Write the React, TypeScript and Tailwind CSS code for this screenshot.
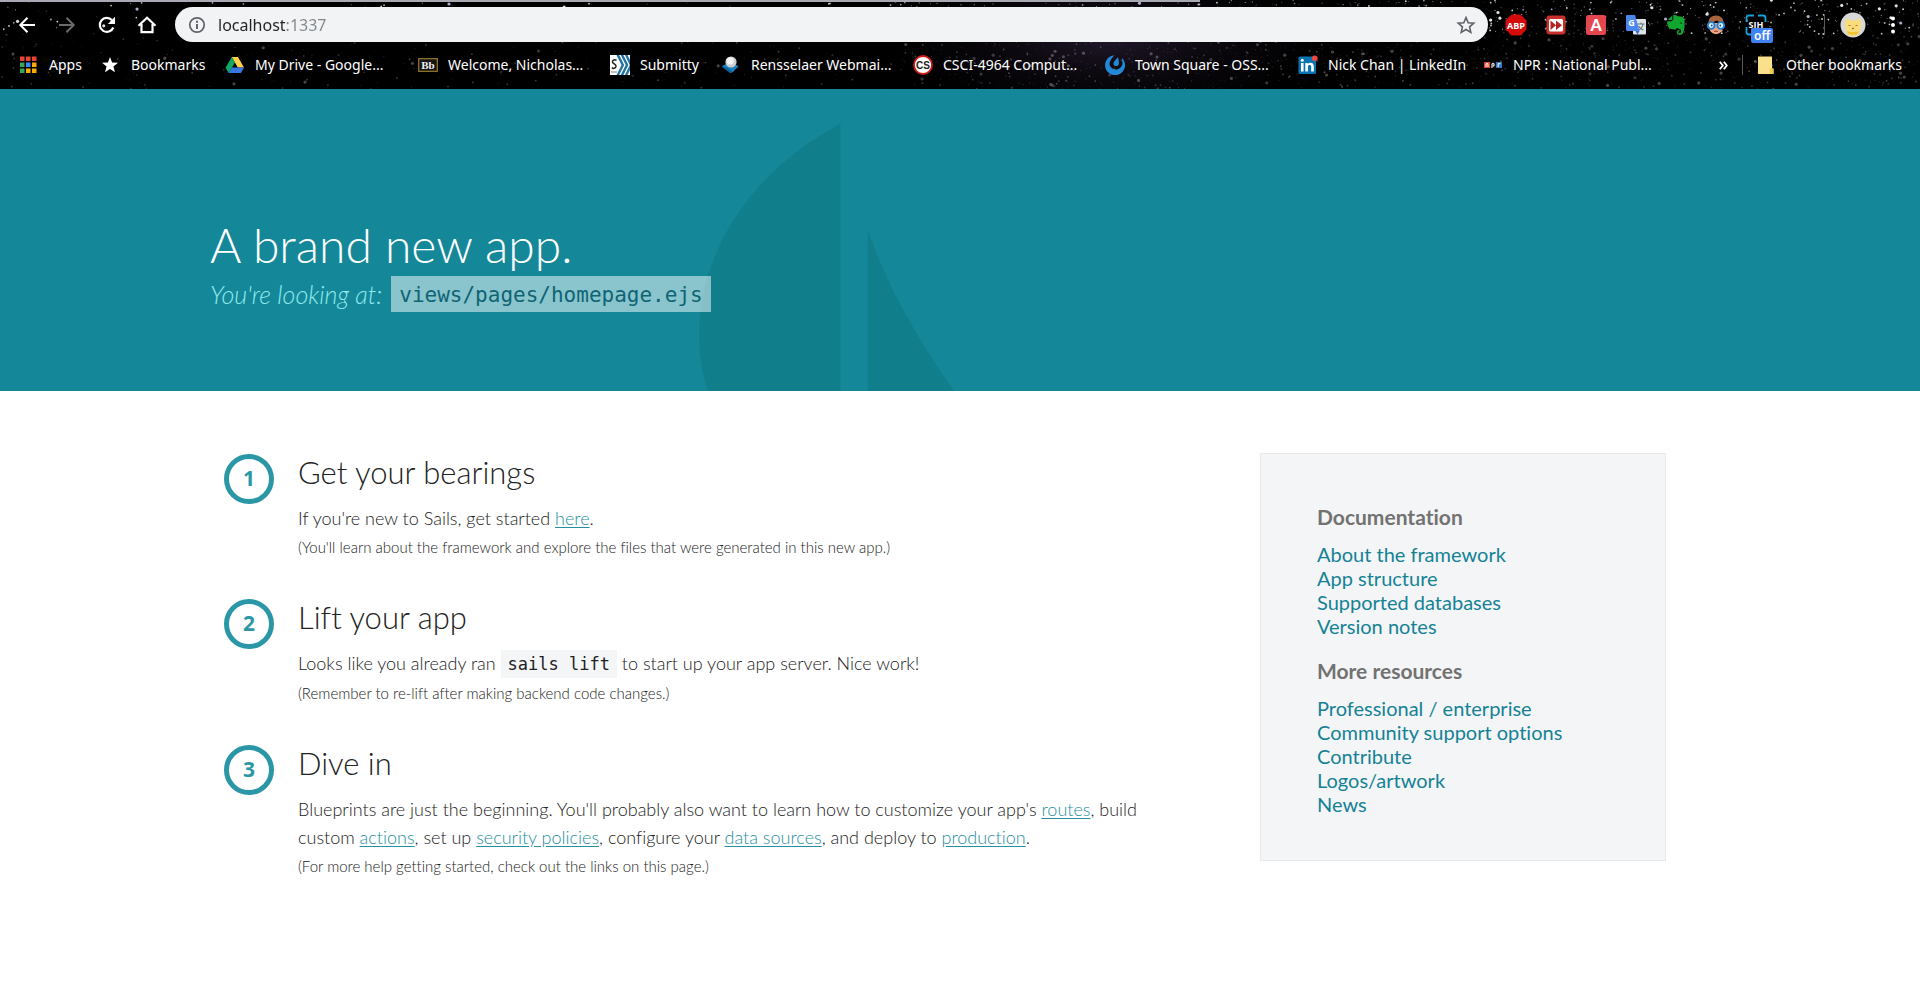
import type { ReactNode } from "react";

type Star = { x: number; y: number; r: number; o: number; warm: boolean };

function makeStars(): Star[] {
  let seed = 4217;
  const next = () => {
    seed = (seed * 1664525 + 1013904223) % 4294967296;
    return seed / 4294967296;
  };
  const stars: Star[] = [];
  for (let i = 0; i < 3600; i++) {
    const x = next() * 1920;
    const y = next() * 89;
    const bright = next();
    const density = x > 900 ? 1 : 0.25;
    const keep = next();
    if (keep > density) continue;
    const top = y < 34 ? 1 : 0.3;
    stars.push({
      x,
      y,
      r: bright > 0.95 ? 1.6 : bright > 0.7 ? 0.9 : 0.6,
      o: (0.15 + bright * 0.75) * top,
      warm: next() > 0.7,
    });
  }
  return stars;
}

const STARS = makeStars();

function Starfield() {
  return (
    <svg className="absolute inset-0 h-full w-full" viewBox="0 0 1920 89" preserveAspectRatio="xMidYMid slice" aria-hidden="true">
      <defs>
        <radialGradient id="nebula">
          <stop offset="0" stopColor="#3b2a4a" stopOpacity="0.55" />
          <stop offset="1" stopColor="#000" stopOpacity="0" />
        </radialGradient>
      </defs>
      <rect width="1920" height="89" fill="#000" />
      <ellipse cx="1110" cy="40" rx="260" ry="90" fill="url(#nebula)" />
      {STARS.map((s, i) => (
        <circle key={i} cx={s.x} cy={s.y} r={s.r} fill={s.warm ? "#c9c4e8" : "#fff"} opacity={s.o} />
      ))}
    </svg>
  );
}

function ToolButton({ label, children }: { label: string; children: ReactNode }) {
  return (
    <button type="button" aria-label={label} className="relative flex h-9 w-10 shrink-0 items-center justify-center">
      {children}
    </button>
  );
}

function BackIcon() {
  return (
    <svg width="18" height="18" viewBox="0 0 18 18" fill="none" stroke="#fff" strokeWidth="2">
      <path d="M17 9H2.5M9.5 1.8 2.3 9l7.2 7.2" />
    </svg>
  );
}

function ForwardIcon() {
  return (
    <svg width="18" height="18" viewBox="0 0 18 18" fill="none" stroke="#6b6b6b" strokeWidth="2">
      <path d="M1 9h14.500M8.500 1.800 15.700 9l-7.200 7.200" />
    </svg>
  );
}

function ReloadIcon() {
  return (
    <svg width="18" height="18" viewBox="0 0 18 18" fill="none">
      <path d="M15.300 11.500A7 7 0 1 1 14 4.200" stroke="#fff" strokeWidth="2.200" />
      <path d="M17 .8V8H9.800z" fill="#fff" />
    </svg>
  );
}

function HomeIcon() {
  return (
    <svg width="20" height="18" viewBox="0 0 20 18" fill="none" stroke="#fff" strokeWidth="2.200">
      <path d="M1.500 9.800 10 1.800l8.500 8M4.500 8v8.200h11V8" />
    </svg>
  );
}

function InfoIcon() {
  return (
    <svg width="18" height="18" viewBox="0 0 18 18" fill="none" className="shrink-0">
      <circle cx="9" cy="9" r="7.200" stroke="#5f6368" strokeWidth="1.700" />
      <path d="M9 8v5" stroke="#5f6368" strokeWidth="2" />
      <path d="M9 4.800v2" stroke="#5f6368" strokeWidth="2" />
    </svg>
  );
}

function StarOutline() {
  return (
    <svg width="20" height="20" viewBox="0 0 20 20" fill="none" stroke="#5f6368" strokeWidth="1.600">
      <path d="m10 2.500 2.200 5.200 5.600.5-4.200 3.700 1.200 5.500L10 14.500l-4.800 2.900 1.200-5.500L2.200 8.200l5.600-.5z" />
    </svg>
  );
}

function AbpIcon() {
  return (
    <svg width="22" height="22" viewBox="0 0 22 22">
      <path d="M6.500.5h9l6 6v9l-6 6h-9l-6-6v-9z" fill="#d40b0b" />
      <text x="11" y="14.500" textAnchor="middle" fontSize="9" fontWeight="700" fontFamily="Open Sans, sans-serif" fill="#fff">ABP</text>
    </svg>
  );
}

function SkipIcon() {
  return (
    <svg width="20" height="20" viewBox="0 0 20 20">
      <rect x="0.500" y="0.500" width="19" height="19" rx="3" fill="#c9302c" />
      <rect x="3" y="4" width="14" height="12.500" rx="1.500" fill="#fff" />
      <path d="m4.500 5.500 5.500 4.700-5.500 4.700zM10 5.500l6 4.700-6 4.700z" fill="#b5221f" />
    </svg>
  );
}

function AIcon() {
  return (
    <svg width="20" height="20" viewBox="0 0 20 20">
      <rect width="20" height="20" rx="2.500" fill="#e5454d" />
      <text x="10" y="15.500" textAnchor="middle" fontSize="16" fontWeight="900" fontFamily="Lato, sans-serif" fill="#fff">A</text>
    </svg>
  );
}

function TranslateIcon() {
  return (
    <svg width="22" height="22" viewBox="0 0 22 22">
      <rect x="8" y="5" width="13" height="15.500" rx="1" fill="#dfe3e8" />
      <path d="M12.500 10h7M16 8.500V10m2 0c-.5 3-2.500 5-4.500 6m0-4c1 2 2.500 3.500 5 4" stroke="#5c7480" strokeWidth="1.100" fill="none" />
      <path d="M1.500 1H10l4.500 16H2.500A1.500 1.500 0 0 1 1 15.500v-14z" fill="#4a86ee" />
      <path d="M10.500 17h4l-2 3.500z" fill="#3367d6" />
      <text x="6.500" y="12" textAnchor="middle" fontSize="9" fontWeight="700" fontFamily="Open Sans, sans-serif" fill="#fff">G</text>
    </svg>
  );
}

function EvernoteIcon() {
  return (
    <svg width="20" height="22" viewBox="0 0 20 22">
      <path d="M6.300 1.500v3.200c0 .8-.6 1.400-1.400 1.400H1.700z" fill="#10a630" />
      <path d="M7.300 1c2.200-.2 3.500.3 4 1.300 2 .1 4 .4 5.400.9 1.300.5 1.600 1.800 1.800 3.600.4 3.800.1 9-1.400 12.300-.6 1.400-1.800 1.800-3.300 1.800-1.900 0-3-1-3-2.600 0-1.500 1.100-2.500 2.700-2.500v1.500c-.8 0-1.200.4-1.200 1s.5 1 1.400 1c.9 0 1.400-.6 1.400-2.200 0-1.300-.6-1.900-1.800-2.100-1.200-.2-1.700-.5-2.300-1.300-.5 1.500-1.700 1.900-3.400 1.700C4.700 15 2.800 14.400 2 12.500 1.300 10.800 1 9 1 7.300h4.200c1.300 0 2.100-.8 2.100-2.100z" fill="#10a630" />
      <path d="M13.800 9.300c.3-1 2.100-1 2.400.4-.9-.3-1.600-.3-2.400-.4z" fill="#03300d" />
    </svg>
  );
}

function FaceIcon() {
  return (
    <svg width="20" height="20" viewBox="0 0 20 20">
      <path d="M3.500 8h13v5c0 3.500-3 6-6.500 6s-6.500-2.500-6.500-6z" fill="#e8a583" />
      <path d="M2.500 11V7.500C2.500 3.500 5.500.5 10 .5s7.500 3 7.500 7V11l-1.500-3-5.500-2.500L5 8.500z" fill="#a9643c" />
      <circle cx="5.200" cy="10.500" r="3.400" fill="#e6f4fd" stroke="#1f7fd6" strokeWidth="1.900" />
      <circle cx="14.800" cy="10.500" r="3.400" fill="#e6f4fd" stroke="#1f7fd6" strokeWidth="1.900" />
      <circle cx="5.700" cy="10.500" r="1" fill="#1b4f8a" />
      <circle cx="14.300" cy="10.500" r="1" fill="#1b4f8a" />
      <path d="M8 16.300h4" stroke="#9b3b2c" strokeWidth="1" />
    </svg>
  );
}

function SihIcon() {
  return (
    <svg width="22" height="22" viewBox="0 0 22 22">
      <path d="M1.500 8V4A2.500 2.500 0 0 1 4 1.500H9M13 1.500h5A2.500 2.500 0 0 1 20.500 4V8M1.500 13v5A2.500 2.500 0 0 0 4 20.500H8" stroke="#12a5dc" strokeWidth="1.800" fill="none" />
      <text x="11" y="14" textAnchor="middle" fontSize="9" fontWeight="700" fontFamily="Open Sans, sans-serif" fill="#fff">SIH</text>
    </svg>
  );
}

function AvatarIcon() {
  return (
    <svg width="26" height="26" viewBox="0 0 26 26">
      <circle cx="13" cy="13" r="12.500" fill="#d8d8d8" />
      <path d="M5.500 8.500 6.500 6l3 2.200h7L19.500 6l1 2.500c1 3 .5 7-.5 9.500-1 3.500-2.500 5.500-4.500 6h-5c-2-.5-3.500-2.500-4.500-6-1-2.500-1.500-6.500-.5-9.500z" fill="#fbdc7c" />
      <path d="M7 19c1.500 1.500 10.500 1.500 12 0l-.8 2.500c-1.500 1.800-8.900 1.800-10.400 0z" fill="#f4c430" />
      <path d="M8.500 13.500h2M15.500 13.500h2M12 16l1 .8 1-.8" stroke="#a5762a" strokeWidth="1.100" fill="none" />
    </svg>
  );
}

function AppsIcon() {
  const colors = ["#ea4335", "#ea4335", "#ea4335", "#34a853", "#4285f4", "#fbab05", "#34a853", "#fbab05", "#fbab05"];
  return (
    <svg width="20" height="20" viewBox="0 0 20 20">
      {colors.map((c, i) => (
        <rect key={i} x={1 + (i % 3) * 6} y={1.5 + Math.floor(i / 3) * 6} width="4.500" height="4.500" fill={c} />
      ))}
    </svg>
  );
}

function StarSolid() {
  return (
    <svg width="20" height="20" viewBox="0 0 20 20">
      <path d="m9 2 2.100 5.400 5.900.3-4.600 3.700 1.600 5.800L9 14l-5 3.200 1.600-5.800L1 7.700l5.900-.3z" fill="#fff" />
    </svg>
  );
}

function DriveIcon() {
  return (
    <svg width="20" height="20" viewBox="0 0 20 20">
      <path d="M6.800 2h6.200l6 10.500h-6.200z" fill="#ffcf48" />
      <path d="M6.800 2 10 7.500 3.600 18 .5 12.800z" fill="#11a861" />
      <path d="M6.700 12.600H19L16 18H3.600z" fill="#3777e3" />
    </svg>
  );
}

function BbIcon() {
  return (
    <svg width="20" height="20" viewBox="0 0 20 20">
      <rect x="0.700" y="3.700" width="18.600" height="12.600" fill="#151515" stroke="#9c7a2e" strokeWidth="1.200" />
      <text x="10" y="14" textAnchor="middle" fontSize="11" fontWeight="700" fontFamily="Liberation Serif, serif" fill="#f2f2f2">Bb</text>
    </svg>
  );
}

function SubmittyIcon() {
  return (
    <svg width="20" height="20" viewBox="0 0 20 20">
      <rect width="20" height="20" fill="#fff" />
      <path d="M6.500 0h2.700l5 10-5 10H6.500l5-10zM10.700 0h2.700l5 10-5 10h-2.700l5-10z" fill="#2472a4" />
      <path d="M15 0h2.500L20 5v10l-2.500 5H15l4.700-10z" fill="#2472a4" />
      <path d="M6.500 5.500C5 4 2 5 2.500 7s4 2 3.500 4.500c-.5 2-3 2.500-4 1" stroke="#222" strokeWidth="1.500" fill="none" />
      <path d="M1 17h6" stroke="#999" strokeWidth="1.200" />
    </svg>
  );
}

function WebmailIcon() {
  return (
    <svg width="20" height="20" viewBox="0 0 20 20">
      <path d="m1 11 8-4 8.500 4-5.500 6-3 .8z" fill="#1d7fbf" />
      <path d="m1 11 6 2.500 5 3.500L9 18l-7.500-5.500z" fill="#0d5f9a" />
      <circle cx="10" cy="7" r="5.600" fill="#cfcfcf" />
      <circle cx="9.200" cy="5.800" r="3.600" fill="#f4f4f4" />
    </svg>
  );
}

function CsIcon() {
  return (
    <svg width="20" height="20" viewBox="0 0 20 20">
      <circle cx="10" cy="10" r="9" fill="#fff" stroke="#d11a1a" strokeWidth="1.800" />
      <text x="10" y="13.500" textAnchor="middle" fontSize="10" fontWeight="700" fontFamily="Liberation Sans, sans-serif" fill="#222">CS</text>
    </svg>
  );
}

function MattermostIcon() {
  return (
    <svg width="20" height="20" viewBox="0 0 20 20">
      <path d="M9.500.2A10 10 0 1 0 17 3l.2 3A6.300 6.300 0 1 1 4.500 9.800C4.300 6 6.300 3.500 9.500.2z" fill="#2389d7" />
      <path d="M13 2.200c.6 2.500 1.300 5 .8 7-.6 2.300-4.300 2.600-5.200.2C7.800 7 11 4.500 13 2.200z" fill="#2389d7" />
    </svg>
  );
}

function LinkedInIcon() {
  return (
    <svg width="20" height="20" viewBox="0 0 20 20">
      <rect x="0.500" y="1.500" width="17.500" height="17.500" rx="1.500" fill="#0a73b1" />
      <path d="M3 8h2.600v8.500H3zM7.300 8h2.500v1.200c1.500-2.300 6-1.900 6 2v5.300h-2.600v-4.700c0-2.300-3.300-2.200-3.300 0v4.700H7.300z" fill="#fff" />
      <circle cx="4.300" cy="5.300" r="1.500" fill="#fff" />
      <circle cx="16.800" cy="3.200" r="2.800" fill="#f0483e" />
    </svg>
  );
}

function NprIcon() {
  return (
    <svg width="20" height="20" viewBox="0 0 20 20">
      <rect x="1" y="7" width="6" height="6" fill="#e0442c" />
      <rect x="7" y="7" width="6" height="6" fill="#111" />
      <rect x="13" y="7" width="6" height="6" fill="#3a75c4" />
      <path d="M3 12V8.700h2V12M9 13V8.700h2V11H9.500M15.200 12V8.700H17.500" stroke="#fff" strokeWidth="1" fill="none" />
    </svg>
  );
}

function FolderIcon() {
  return (
    <svg width="20" height="20" viewBox="0 0 20 20">
      <path d="M2 1.500h14v12h1.500V19H2.500L2 18.500z" fill="#fbe08b" />
      <path d="M13.500 13.500h4V19h-3.500z" fill="#f0c94f" />
    </svg>
  );
}

const bookmarks: { label: string; icon: ReactNode; width: string }[] = [
  { label: "Apps", icon: <AppsIcon />, width: "w-[82px]" },
  { label: "Bookmarks", icon: <StarSolid />, width: "w-[124px]" },
  { label: "My Drive - Google...", icon: <DriveIcon />, width: "w-[193px]" },
  { label: "Welcome, Nicholas...", icon: <BbIcon />, width: "w-48" },
  { label: "Submitty", icon: <SubmittyIcon />, width: "w-[111px]" },
  { label: "Rensselaer Webmai...", icon: <WebmailIcon />, width: "w-48" },
  { label: "CSCI-4964 Comput...", icon: <CsIcon />, width: "w-48" },
  { label: "Town Square - OSS...", icon: <MattermostIcon />, width: "w-[193px]" },
  { label: "Nick Chan | LinkedIn", icon: <LinkedInIcon />, width: "w-[185px]" },
  { label: "NPR : National Publ...", icon: <NprIcon />, width: "w-48" },
];

function BrowserBar() {
  return (
    <div className="relative h-[90px] overflow-hidden border-b border-[#148898] bg-black font-['Noto_Sans','Open_Sans',sans-serif] text-white">
      <Starfield />
      <div className="relative flex h-full flex-col">
        <div className="h-0.5 w-[1200px] bg-[#a9a9b4]" />
        <div className="mt-[5px] flex h-[35px] items-center px-[7px]">
          <ToolButton label="Back"><BackIcon /></ToolButton>
          <ToolButton label="Forward"><ForwardIcon /></ToolButton>
          <ToolButton label="Reload"><ReloadIcon /></ToolButton>
          <ToolButton label="Home"><HomeIcon /></ToolButton>
          <div className="ml-2 flex h-[35px] min-w-0 flex-1 items-center gap-3 rounded-full bg-[#f1f3f4] pl-[13px] pr-3">
            <InfoIcon />
            <input
              type="text"
              aria-label="Address"
              defaultValue="localhost:1337"
              className="min-w-0 flex-1 bg-[linear-gradient(90deg,#202124_67px,#80868b_67px)] bg-clip-text text-base text-transparent outline-none"
            />
            <button type="button" aria-label="Bookmark this page"><StarOutline /></button>
          </div>
          <div className="ml-2 flex items-center">
            <ToolButton label="Adblock Plus"><AbpIcon /></ToolButton>
            <ToolButton label="Skip"><SkipIcon /></ToolButton>
            <ToolButton label="A"><AIcon /></ToolButton>
            <ToolButton label="Translate"><TranslateIcon /></ToolButton>
            <ToolButton label="Evernote"><EvernoteIcon /></ToolButton>
            <ToolButton label="Face"><FaceIcon /></ToolButton>
            <ToolButton label="SIH">
              <SihIcon />
              <span className="absolute bottom-0 left-[15px] rounded-xs bg-[#3f82f4] px-[3px] text-xs leading-[15px] font-semibold">off</span>
            </ToolButton>
          </div>
          <div className="ml-12 h-5 w-px bg-[#5a5a5a]" />
          <div className="ml-2 flex">
            <ToolButton label="Profile"><AvatarIcon /></ToolButton>
            <ToolButton label="Menu">
              <svg width="4" height="18" viewBox="0 0 4 18" fill="#fff">
                <circle cx="2" cy="2.500" r="2" />
                <circle cx="2" cy="9" r="2" />
                <circle cx="2" cy="15.500" r="2" />
              </svg>
            </ToolButton>
          </div>
        </div>
        <nav aria-label="Bookmarks" className="flex h-[46px] items-center pl-[19px] pr-[18px] text-sm">
          {bookmarks.map((b) => (
            <a key={b.label} href="#" className={`flex shrink-0 items-center gap-[10px] whitespace-nowrap ${b.width}`}>
              <span className="shrink-0">{b.icon}</span>
              {b.label}
            </a>
          ))}
          <div className="ml-auto flex shrink-0 items-center">
            <button type="button" aria-label="More bookmarks" className="mr-[14px]">
              <svg width="9" height="9" viewBox="0 0 9 9" fill="none" stroke="#fff" strokeWidth="1.800">
                <path d="m.8.8 3 3.700-3 3.700M4.800.8l3 3.700-3 3.700" />
              </svg>
            </button>
            <div className="mr-[13px] h-5 w-px bg-[#5a5a5a]" />
            <a href="#" className="flex items-center gap-[10px] whitespace-nowrap">
              <FolderIcon />
              Other bookmarks
            </a>
          </div>
        </nav>
      </div>
    </div>
  );
}

function Hero() {
  return (
    <header className="relative h-[301px] bg-[#148898]">
      <svg className="absolute bottom-0 left-1/2 -translate-x-full" width="261" height="267" viewBox="699 124 261 267" fill="#117e8c" aria-hidden="true">
        <path d="M840.500 124C760 165 699 245 699 335C699 355 702 373 708 391H840.500z" />
        <path d="M867.500 229Q892 303 954 391H867.500z" />
      </svg>
      <div className="relative mx-auto max-w-[1500px] pt-[124px]">
        <h1 className="text-5xl leading-[62px] font-light text-white">A brand new app.</h1>
        <p className="flex items-center gap-[9px] text-[25px] leading-[36px] font-light text-[#8fe8ee] italic">
          You're looking at:
          <code className="bg-white/50 px-2 pt-0.5 font-['DejaVu_Sans_Mono',monospace] text-[21px] leading-[34px] text-[#0e6475] not-italic">
            views/pages/homepage.ejs
          </code>
        </p>
      </div>
    </header>
  );
}

function TextLink({ children }: { children: string }) {
  return (
    <a href="#" className="text-[#2690a1] underline underline-offset-2">
      {children}
    </a>
  );
}

function Step({ n, title, note, children }: { n: number; title: string; note: string; children: ReactNode }) {
  return (
    <li className="flex gap-6 pb-[37px]">
      <span className="flex size-[50px] shrink-0 items-center justify-center rounded-full border-5 border-[#2b97a6] font-['Open_Sans',sans-serif] text-[21px] font-bold text-[#2b97a6]">
        {n}
      </span>
      <div>
        <h2 className="mb-[14px] text-[31px] leading-9 font-light">{title}</h2>
        <p className="text-lg leading-7 font-light">{children}</p>
        <p className="text-[15px] leading-[30px] font-light">{note}</p>
      </div>
    </li>
  );
}

function LinkGroup({ title, links }: { title: string; links: string[] }) {
  return (
    <section className="mb-5">
      <h3 className="mb-3 text-[21px] leading-[26px] font-bold text-[#727272]">{title}</h3>
      <ul className="text-xl leading-6 text-[#148295]">
        {links.map((l) => (
          <li key={l}>
            <a href="#">{l}</a>
          </li>
        ))}
      </ul>
    </section>
  );
}

export default function App() {
  return (
    <div className="min-h-screen bg-white font-[Lato,sans-serif] text-[#222] [font-variant-ligatures:none]">
      <BrowserBar />
      <Hero />
      <main className="mx-auto flex max-w-[1500px] items-start justify-between pt-[62px] pr-11 pl-[14px]">
        <ol className="max-w-[950px] min-w-0 pt-px">
          <Step n={1} title="Get your bearings" note="(You'll learn about the framework and explore the files that were generated in this new app.)">
            If you're new to Sails, get started <TextLink>here</TextLink>.
          </Step>
          <Step n={2} title="Lift your app" note="(Remember to re-lift after making backend code changes.)">
            Looks like you already ran{" "}
            <code className="bg-[#f4f5f7] px-[7px] py-1 font-['DejaVu_Sans_Mono',monospace] text-[17px] font-normal">sails lift</code>{" "}
            to start up your app server. Nice work!
          </Step>
          <Step n={3} title="Dive in" note="(For more help getting started, check out the links on this page.)">
            Blueprints are just the beginning. You'll probably also want to learn how to customize your app's <TextLink>routes</TextLink>, build
            custom <TextLink>actions</TextLink>, set up <TextLink>security policies</TextLink>, configure your{" "}
            <TextLink>data sources</TextLink>, and deploy to <TextLink>production</TextLink>.
          </Step>
        </ol>
        <aside className="w-[406px] shrink-0 border border-[#e8e9ea] bg-[#f4f5f7] px-14 pt-[50px] pb-6">
          <LinkGroup title="Documentation" links={["About the framework", "App structure", "Supported databases", "Version notes"]} />
          <LinkGroup
            title="More resources"
            links={["Professional / enterprise", "Community support options", "Contribute", "Logos/artwork", "News"]}
          />
        </aside>
      </main>
    </div>
  );
}
